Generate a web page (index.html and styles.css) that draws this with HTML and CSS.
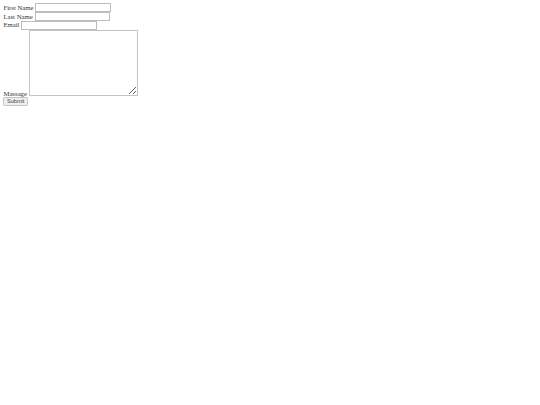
FILE: index.html
```html
<!DOCTYPE html>
<html>
<head>
<meta charset="utf-8">
<link rel="stylesheet" href="styles.css">
</head>
<body class="page">
<div class="scaler">
<form class="contact">
<label class="field">First Name <input type="text" class="input"></label><br>
<label class="field">Last Name <input type="text" class="input"></label><br>
<label class="field">Email <input type="email" class="input"></label><br>
<label class="field">Massage <textarea class="message"></textarea></label><br>
<button type="submit" class="submit">Submit</button>
</form>
</div>
</body>
</html>
```

FILE: styles.css
```css
.page {
  margin: 0;
  background: #ffffff;
}
.scaler {
  zoom: 0.421875;
  padding: 8px;
  font-family: "Liberation Serif", "Times New Roman", serif;
  font-size: 16px;
  color: #333333;
}
.contact {
  margin: 0;
}
.input {
  font-family: "Liberation Sans", Arial, sans-serif;
  border: 2px solid #bdbdbd;
  padding: 1px 2px;
}
.message {
  width: 260px;
  height: 156px;
  box-sizing: border-box;
  border: 2px solid #c4c4c4;
}
.submit {
  font-family: "Liberation Sans", Arial, sans-serif;
  color: #444444;
  background: #efefef;
  border: 2px solid #c4c4c4;
  border-radius: 3px;
  padding: 1px 6px;
}
```
